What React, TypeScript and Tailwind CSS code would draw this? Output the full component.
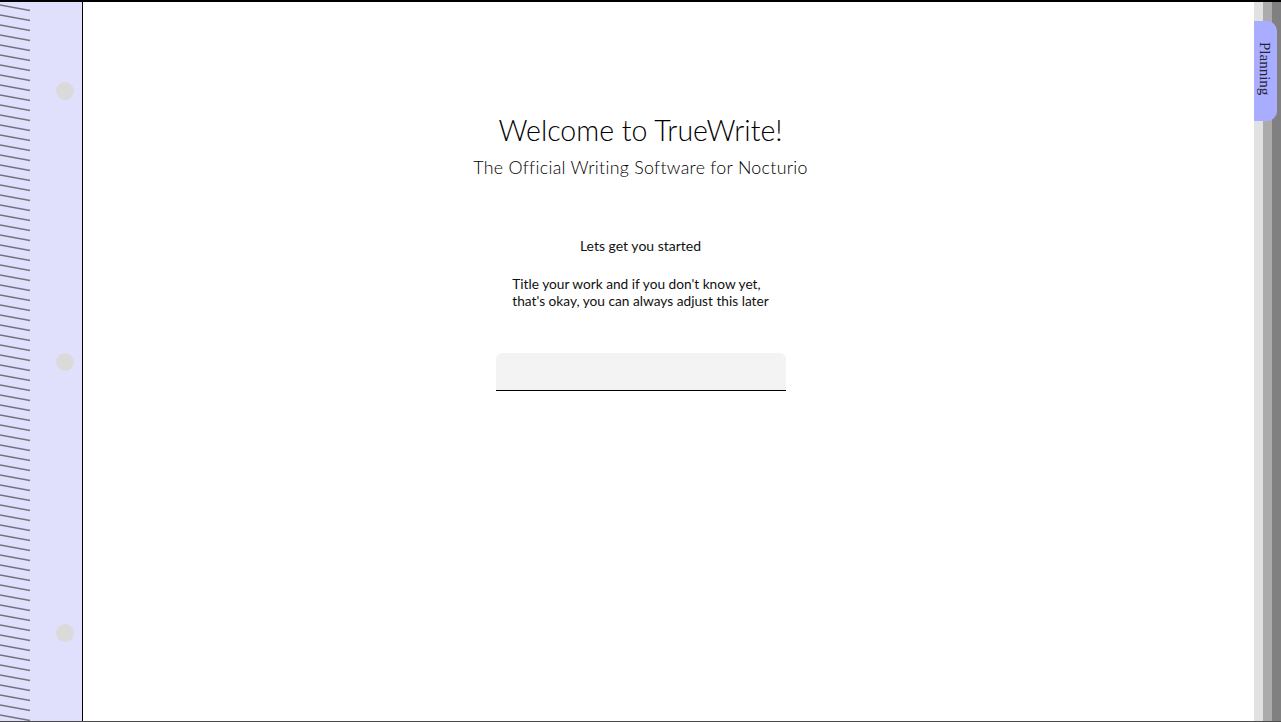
import React from "react";

export default function App() {
  return (
    <div className="h-screen w-full flex flex-col border-t-2 border-black border-b border-b-[#4a4a4a] bg-white overflow-hidden">
      <div className="flex flex-1 min-h-0">
        {/* Left notebook binding */}
        <div className="w-[83px] shrink-0 bg-[#e0e0fd] border-r border-black flex">
          <svg width="31" height="100%" className="shrink-0 block">
            <defs>
              <pattern id="spiral" width="31" height="10" patternUnits="userSpaceOnUse">
                <line x1="0" y1="3" x2="30" y2="8.5" stroke="#73737f" strokeWidth="1.7" />
              </pattern>
            </defs>
            <rect width="31" height="100%" fill="url(#spiral)" />
          </svg>
          <div className="flex-1 flex flex-col justify-between pt-[80px] pb-[79px] pl-[25px]">
            <div className="w-[18px] h-[18px] rounded-full bg-[#dadada]" />
            <div className="w-[18px] h-[18px] rounded-full bg-[#dadada]" />
            <div className="w-[18px] h-[18px] rounded-full bg-[#dadada]" />
          </div>
        </div>

        {/* Main page */}
        <div className="flex-1 min-w-0 bg-white pr-[56px]">
          <div
            className="flex flex-col items-center text-black pt-[110px]"
            style={{ fontFamily: "Lato, 'Open Sans', sans-serif" }}
          >
            <h1 className="text-[28.5px] leading-[36px] font-light">Welcome to TrueWrite!</h1>
            <h2 className="mt-[5px] text-[17.8px] leading-[28px] font-light tracking-[0.3px]">
              The Official Writing Software for Nocturio
            </h2>
            <p className="mt-[55px] text-[14px] leading-[20px] text-[#111]">Lets get you started</p>
            <p className="mt-[19px] text-[13.7px] leading-[17px] text-left text-[#111]">
              Title your work and if you don't know yet,
              <br />
              that's okay, you can always adjust this later
            </p>
            <input
              type="text"
              className="mt-[44px] w-[290px] h-[38px] bg-[#f3f3f3] rounded-t-[6px] border-b border-black outline-none px-3 text-[14px]"
            />
          </div>
        </div>

        {/* Right tabs */}
        <div className="relative w-[27px] shrink-0 flex">
          <div className="w-[9px] bg-[#e1e1e1]" />
          <div className="w-[9px] bg-[#ababab]" />
          <div className="w-[9px] bg-[#808080]" />
          <div className="absolute left-0 top-[19px] w-[23px] h-[100px] bg-[#a9adff] rounded-r-[10px] flex items-center justify-center">
            <span
              className="text-[15px] leading-[15px] text-[#222230] whitespace-nowrap [writing-mode:vertical-rl] -ml-[3px] -mt-[4px]"
              style={{ fontFamily: "'Liberation Serif', 'DejaVu Serif', serif" }}
            >
              Planning
            </span>
          </div>
        </div>
      </div>
    </div>
  );
}
